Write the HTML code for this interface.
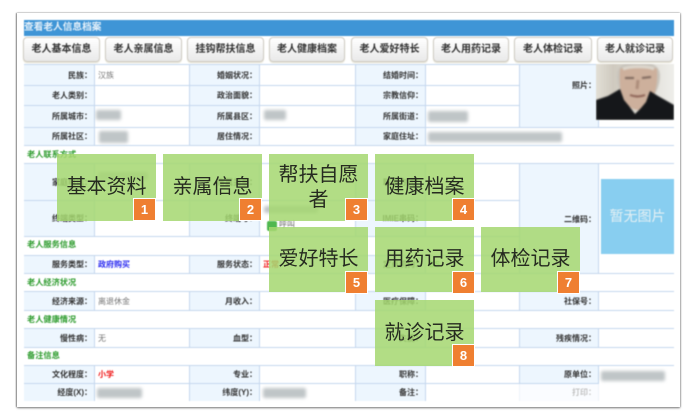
<!DOCTYPE html>
<html lang="zh">
<head>
<meta charset="utf-8">
<style>
html,body{margin:0;padding:0;background:#fff}
body{position:relative;width:690px;height:415px;overflow:hidden;font-family:"Liberation Sans","Noto Sans CJK SC",sans-serif}
.card{position:absolute;left:17px;top:13px;width:663px;height:394px;background:#fff;box-shadow:-1px 0 1px #8f8f8f,0 1px 2px #777,1px 0 1px #ccc,0 -1px 1px #eee}
.tb{position:absolute;left:0;top:0;width:690px;height:415px;filter:blur(.45px)}
.title{position:absolute;left:24px;top:20px;width:650px;height:16px;background:#3f95d6;color:#e6f1fa;font-size:9.7px;font-weight:bold;line-height:16px;white-space:nowrap}
.btn{position:absolute;top:37px;height:25px;box-sizing:border-box;border:1px solid #cfccc4;border-radius:4px;background:linear-gradient(#fff,#e9e9e9);color:#333;font-size:10px;font-weight:bold;line-height:23px;text-align:center;white-space:nowrap;box-shadow:0 1px 1px #e4e0d0}
.c{position:absolute;box-sizing:border-box;background:#edf6fe;border:1px solid #c5d8ee;color:#333;font-size:8px;font-weight:bold;text-align:right;white-space:nowrap;display:flex;align-items:center;justify-content:flex-end;padding-right:2px}
.f{border-left:0}
.v{position:absolute;box-sizing:border-box;background:#fff;border:1px solid #c5d8ee;border-left:0;color:#777;font-size:8px;white-space:nowrap;display:flex;align-items:center;padding-left:3px}
.s{position:absolute;left:27px;color:#2a9a2a;font-size:8.2px;font-weight:bold;line-height:12px;white-space:nowrap}
.sm{position:absolute;background:#bfc5c7;filter:blur(1.5px);border-radius:2px}
.g{position:absolute;width:99px;background:rgba(165,215,112,.85);color:#262b20;font-size:20px;line-height:25px;text-align:center;display:flex;align-items:center;justify-content:center;white-space:normal}
.n{position:absolute;width:23px;height:23px;box-sizing:border-box;background:#ef7f31;border:1px solid #fff;color:#fff;font-size:13px;font-weight:bold;line-height:21px;text-align:center}
</style>
</head>
<body>
<div class="card"></div>
<div class="tb">
<div class="title">查看老人信息档案</div>
<div class="btn" style="left:23px;width:77px">老人基本信息</div>
<div class="btn" style="left:105px;width:77px">老人亲属信息</div>
<div class="btn" style="left:187px;width:77px">挂钩帮扶信息</div>
<div class="btn" style="left:269px;width:76px">老人健康档案</div>
<div class="btn" style="left:351px;width:77px">老人爱好特长</div>
<div class="btn" style="left:433px;width:76px">老人用药记录</div>
<div class="btn" style="left:514px;width:78px">老人体检记录</div>
<div class="btn" style="left:597px;width:76px">老人就诊记录</div>

<!-- row 1 -->
<div class="c f" style="left:24px;top:64px;width:71px;height:22px">民族：</div><div class="v" style="left:95px;top:64px;width:95px;height:22px">汉族</div>
<div class="c" style="left:189px;top:64px;width:71px;height:22px">婚姻状况：</div><div class="v" style="left:260px;top:64px;width:96px;height:22px"></div>
<div class="c" style="left:355px;top:64px;width:71px;height:22px">结婚时间：</div><div class="v" style="left:426px;top:64px;width:94px;height:22px"></div>
<!-- row 2 -->
<div class="c f" style="left:24px;top:85px;width:71px;height:21px">老人类别：</div><div class="v" style="left:95px;top:85px;width:95px;height:21px"></div>
<div class="c" style="left:189px;top:85px;width:71px;height:21px">政治面貌：</div><div class="v" style="left:260px;top:85px;width:96px;height:21px"></div>
<div class="c" style="left:355px;top:85px;width:71px;height:21px">宗教信仰：</div><div class="v" style="left:426px;top:85px;width:94px;height:21px"></div>
<!-- row 3 -->
<div class="c f" style="left:24px;top:105px;width:71px;height:23px">所属城市：</div><div class="v" style="left:95px;top:105px;width:95px;height:23px"></div>
<div class="c" style="left:189px;top:105px;width:71px;height:23px">所属县区：</div><div class="v" style="left:260px;top:105px;width:96px;height:23px"></div>
<div class="c" style="left:355px;top:105px;width:71px;height:23px">所属街道：</div><div class="v" style="left:426px;top:105px;width:94px;height:23px"></div>
<!-- photo label -->
<div class="c" style="left:519px;top:64px;width:80px;height:64px;padding-bottom:22px">照片：</div>
<div class="v" style="left:599px;top:64px;width:75px;height:64px;border-right:0"></div>
<!-- row 4 -->
<div class="c f" style="left:24px;top:127px;width:71px;height:19px">所属社区：</div><div class="v" style="left:95px;top:127px;width:95px;height:19px"></div>
<div class="c" style="left:189px;top:127px;width:71px;height:19px">居住情况：</div><div class="v" style="left:260px;top:127px;width:96px;height:19px"></div>
<div class="c" style="left:355px;top:127px;width:71px;height:19px">家庭住址：</div><div class="v" style="left:426px;top:127px;width:248px;height:19px;border-right:0"></div>

<div class="s" style="top:149px">老人联系方式</div>
<!-- contact -->
<div class="c f" style="left:24px;top:163px;width:71px;height:38px">家庭电话：</div><div class="v" style="left:95px;top:163px;width:95px;height:38px"></div>
<div class="c" style="left:189px;top:163px;width:71px;height:38px">亲属关系：</div><div class="v" style="left:260px;top:163px;width:96px;height:38px"></div>
<div class="c" style="left:355px;top:163px;width:71px;height:38px">联系方式：</div><div class="v" style="left:426px;top:163px;width:94px;height:38px"></div>
<div class="c f" style="left:24px;top:200px;width:71px;height:37px">终端类型：</div><div class="v" style="left:95px;top:200px;width:95px;height:37px"></div>
<div class="c" style="left:189px;top:200px;width:71px;height:37px">终端号：</div><div class="v" style="left:260px;top:200px;width:96px;height:37px"></div>
<div class="c" style="left:355px;top:200px;width:71px;height:37px">IMIE串码：</div><div class="v" style="left:426px;top:200px;width:94px;height:37px"></div>
<div class="c" style="left:519px;top:163px;width:80px;height:111px;padding-bottom:1px"><span style="position:relative;top:1px">二维码：</span></div>
<div class="v" style="left:599px;top:163px;width:75px;height:111px;border-right:0"></div>

<div class="s" style="top:239px">老人服务信息</div>
<div class="c f" style="left:24px;top:255px;width:71px;height:19px">服务类型：</div><div class="v" style="left:95px;top:255px;width:95px;height:19px;color:#2a2af0;font-weight:bold">政府购买</div>
<div class="c" style="left:189px;top:255px;width:71px;height:19px">服务状态：</div><div class="v" style="left:260px;top:255px;width:96px;height:19px;color:#f01818;font-weight:bold">正常</div>
<div class="c" style="left:355px;top:255px;width:71px;height:19px">定点机构：</div><div class="v" style="left:426px;top:255px;width:94px;height:19px;color:#3a3;font-weight:bold">BS</div>

<div class="s" style="top:277px">老人经济状况</div>
<div class="c f" style="left:24px;top:291px;width:71px;height:20px">经济来源：</div><div class="v" style="left:95px;top:291px;width:95px;height:20px">离退休金</div>
<div class="c" style="left:189px;top:291px;width:71px;height:20px">月收入：</div><div class="v" style="left:260px;top:291px;width:96px;height:20px"></div>
<div class="c" style="left:355px;top:291px;width:71px;height:20px">医疗保障：</div><div class="v" style="left:426px;top:291px;width:94px;height:20px"></div>
<div class="c" style="left:519px;top:291px;width:80px;height:20px">社保号：</div><div class="v" style="left:599px;top:291px;width:75px;height:20px;border-right:0"></div>

<div class="s" style="top:314px">老人健康情况</div>
<div class="c f" style="left:24px;top:328px;width:71px;height:20px">慢性病：</div><div class="v" style="left:95px;top:328px;width:95px;height:20px">无</div>
<div class="c" style="left:189px;top:328px;width:71px;height:20px">血型：</div><div class="v" style="left:260px;top:328px;width:96px;height:20px"></div>
<div class="c" style="left:355px;top:328px;width:71px;height:20px">失能：</div><div class="v" style="left:426px;top:328px;width:94px;height:20px"></div>
<div class="c" style="left:519px;top:328px;width:80px;height:20px">残疾情况：</div><div class="v" style="left:599px;top:328px;width:75px;height:20px;border-right:0"></div>

<div class="s" style="top:350px">备注信息</div>
<div class="c f" style="left:24px;top:365px;width:71px;height:19px">文化程度：</div><div class="v" style="left:95px;top:365px;width:95px;height:19px;color:#f01818;font-weight:bold">小学</div>
<div class="c" style="left:189px;top:365px;width:71px;height:19px">专业：</div><div class="v" style="left:260px;top:365px;width:96px;height:19px"></div>
<div class="c" style="left:355px;top:365px;width:71px;height:19px">职称：</div><div class="v" style="left:426px;top:365px;width:94px;height:19px"></div>
<div class="c" style="left:519px;top:365px;width:80px;height:19px">原单位：</div><div class="v" style="left:599px;top:365px;width:75px;height:19px;border-right:0"></div>
<div class="c f" style="left:24px;top:383px;width:71px;height:18px;border-bottom:0">经度(X)：</div><div class="v" style="left:95px;top:383px;width:95px;height:18px;border-bottom:0"></div>
<div class="c" style="left:189px;top:383px;width:71px;height:18px;border-bottom:0">纬度(Y)：</div><div class="v" style="left:260px;top:383px;width:96px;height:18px;border-bottom:0"></div>
<div class="c" style="left:355px;top:383px;width:71px;height:18px;border-bottom:0">备注：</div><div class="v" style="left:426px;top:383px;width:94px;height:18px;border-bottom:0"></div>
<div class="c" style="left:519px;top:383px;width:80px;height:18px;border-bottom:0">打印：</div><div class="v" style="left:599px;top:383px;width:75px;height:18px;border:0"></div>

<!-- blurred values -->
<div class="sm" style="left:96px;top:110px;width:25px;height:10px"></div>
<div class="sm" style="left:264px;top:110px;width:22px;height:10px"></div>
<div class="sm" style="left:99px;top:131px;width:29px;height:12px"></div>
<div class="sm" style="left:428px;top:111px;width:40px;height:11px"></div>
<div class="sm" style="left:428px;top:132px;width:134px;height:10px"></div>
<div class="sm" style="left:98px;top:172px;width:50px;height:8px"></div>
<div class="sm" style="left:264px;top:206px;width:54px;height:7px"></div>
<div class="sm" style="left:97px;top:388px;width:45px;height:10px"></div>
<div class="sm" style="left:263px;top:388px;width:43px;height:10px"></div>
<div class="sm" style="left:601px;top:371px;width:64px;height:10px"></div>
<div style="position:absolute;left:267px;top:221px;width:10px;height:10px;background:#4fb84f;border-radius:2px"></div>
<div style="position:absolute;left:279px;top:220px;color:#666;font-size:8px;line-height:10px">呼叫</div>

<!-- photo -->
<svg style="position:absolute;left:596px;top:64px" width="78" height="56" viewBox="0 0 78 56">
<defs><linearGradient id="bg" x1="0" x2="1" y1="0" y2="0"><stop offset="0" stop-color="#e2dfd6"/><stop offset=".22" stop-color="#cfcabf"/><stop offset=".85" stop-color="#e8e7e2"/><stop offset="1" stop-color="#eeeeea"/></linearGradient></defs>
<rect width="78" height="56" fill="url(#bg)"/>
<g style="filter:blur(.9px)">
<path d="M21 12C21 3 26-2 42-2S64 3 64 12C64 20 61 26 59 30L26 30C23 26 21 20 21 12Z" fill="#c8c4bc"/>
<path d="M24 5C32 1 54 1 61 5 62 20 59 31 55 37 51 43 46 46 41 46 35 45 30 41 27 35 24 28 23 16 24 5Z" fill="#cdb09c"/>
<path d="M27 5C34 2 52 2 58 5" stroke="#dcd6cc" stroke-width="3" fill="none"/>
<path d="M29 14l9 0M46 14l9-1" stroke="#7c675c" stroke-width="2"/>
<path d="M42 16l-1 9" stroke="#ad8d7b" stroke-width="3"/>
<path d="M34 31q8 3 15 0" stroke="#8a5f53" stroke-width="2" fill="none"/>
<path d="M0 36L12 32 24 25 28 36 33 42 39 50 45 44 50 38 54 27 62 32 78 41V56H0Z" fill="#15171a"/>
</g>
</svg>
<!-- no image -->
<div style="position:absolute;left:601px;top:179px;width:73px;height:75px;background:#88cef0;color:#e4f0f4;font-size:14px;line-height:75px;text-align:center;white-space:nowrap">暂无图片</div>
<!-- fade -->
<div style="position:absolute;left:426px;top:384px;width:248px;height:17px;background:rgba(255,255,255,.7)"></div>
</div>

<!-- green boxes -->
<div class="g" style="left:57px;top:154px;height:67px">基本资料</div>
<div class="g" style="left:163px;top:154px;height:67px">亲属信息</div>
<div class="g" style="left:269px;top:154px;height:67px">帮扶自愿者</div>
<div class="g" style="left:375px;top:154px;height:67px">健康档案</div>
<div class="g" style="left:269px;top:227px;height:65px">爱好特长</div>
<div class="g" style="left:375px;top:227px;height:65px">用药记录</div>
<div class="g" style="left:481px;top:227px;height:65px">体检记录</div>
<div class="g" style="left:375px;top:300px;height:66px">就诊记录</div>
<div class="n" style="left:133px;top:198px">1</div>
<div class="n" style="left:239px;top:198px">2</div>
<div class="n" style="left:345px;top:198px">3</div>
<div class="n" style="left:452px;top:198px">4</div>
<div class="n" style="left:345px;top:271px">5</div>
<div class="n" style="left:452px;top:271px">6</div>
<div class="n" style="left:557px;top:271px">7</div>
<div class="n" style="left:452px;top:344px">8</div>
</body>
</html>
